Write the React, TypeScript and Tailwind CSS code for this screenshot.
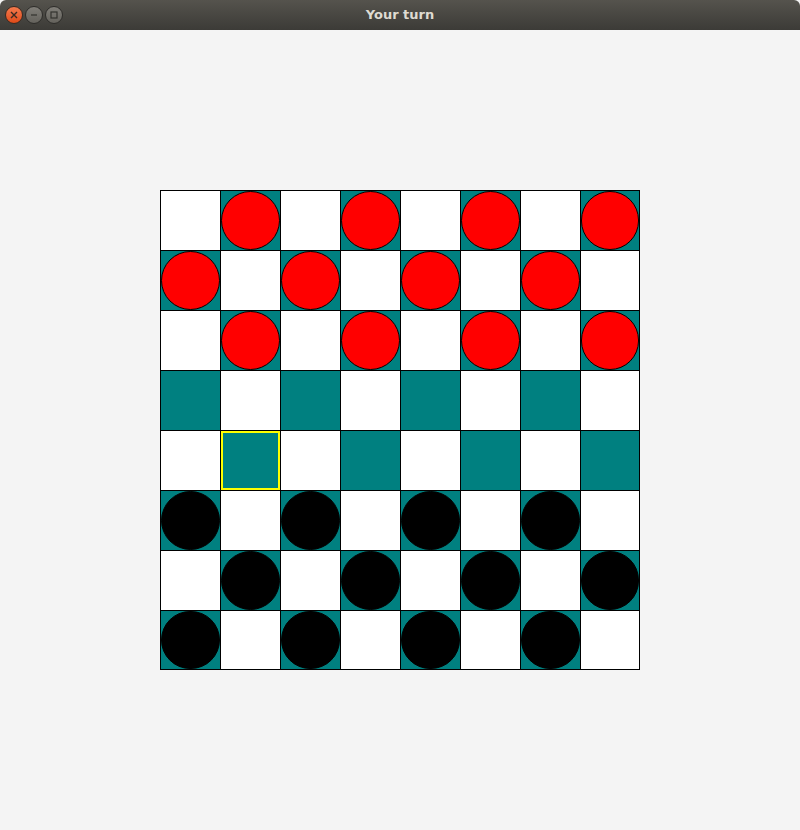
import React from "react";

const RED_ROWS = [0, 1, 2];
const BLACK_ROWS = [5, 6, 7];

function Cell({ r, c }: { r: number; c: number }) {
  const dark = (r + c) % 2 === 1;
  const hasPiece = dark && (RED_ROWS.includes(r) || BLACK_ROWS.includes(r));
  const red = RED_ROWS.includes(r);
  const selected = r === 4 && c === 1;
  return (
    <div
      className={`relative ${dark ? "bg-[#008080]" : "bg-white"} ${
        selected ? "border-2 border-[#ffff00]" : ""
      }`}
    >
      {hasPiece && (
        <div
          className={`absolute inset-0 rounded-full border border-black ${
            red ? "bg-[#ff0000]" : "bg-black"
          }`}
        />
      )}
    </div>
  );
}

export default function App() {
  const cells = [];
  for (let r = 0; r < 8; r++) for (let c = 0; c < 8; c++) cells.push(<Cell key={`${r}-${c}`} r={r} c={c} />);
  return (
    <div className="w-[800px] h-[830px] flex flex-col bg-[#f4f4f4] overflow-hidden">
      <div className="h-[30px] shrink-0 relative flex items-center justify-center bg-gradient-to-b from-[#55534d] to-[#3c3b37] rounded-t-[6px]">
        <div className="absolute left-[5px] top-[6px] flex gap-[2px]">
          <div className="w-[18px] h-[18px] rounded-full bg-gradient-to-b from-[#f47a4c] to-[#df4a16] border border-[#3a2a22] flex items-center justify-center">
            <svg width="8" height="8" viewBox="0 0 8 8">
              <path d="M1 1 L7 7 M7 1 L1 7" stroke="#3a2a22" strokeWidth="1.4" />
            </svg>
          </div>
          <div className="w-[18px] h-[18px] rounded-full bg-gradient-to-b from-[#807e78] to-[#64625c] border border-[#2e2d2a] flex items-center justify-center">
            <svg width="8" height="8" viewBox="0 0 8 8">
              <path d="M1 4 L7 4" stroke="#33322e" strokeWidth="1.2" />
            </svg>
          </div>
          <div className="w-[18px] h-[18px] rounded-full bg-gradient-to-b from-[#807e78] to-[#64625c] border border-[#2e2d2a] flex items-center justify-center">
            <svg width="8" height="8" viewBox="0 0 8 8">
              <rect x="1" y="1" width="6" height="6" fill="none" stroke="#33322e" strokeWidth="1.2" />
            </svg>
          </div>
        </div>
        <span className="text-[#dfdbd2] text-[13px] font-bold font-['DejaVu_Sans',sans-serif]">Your turn</span>
      </div>
      <div className="flex-1 flex items-center justify-center">
        <div className="grid grid-cols-[repeat(7,59px)_58px] grid-rows-[repeat(7,59px)_58px] gap-px p-px bg-black">
          {cells}
        </div>
      </div>
    </div>
  );
}
